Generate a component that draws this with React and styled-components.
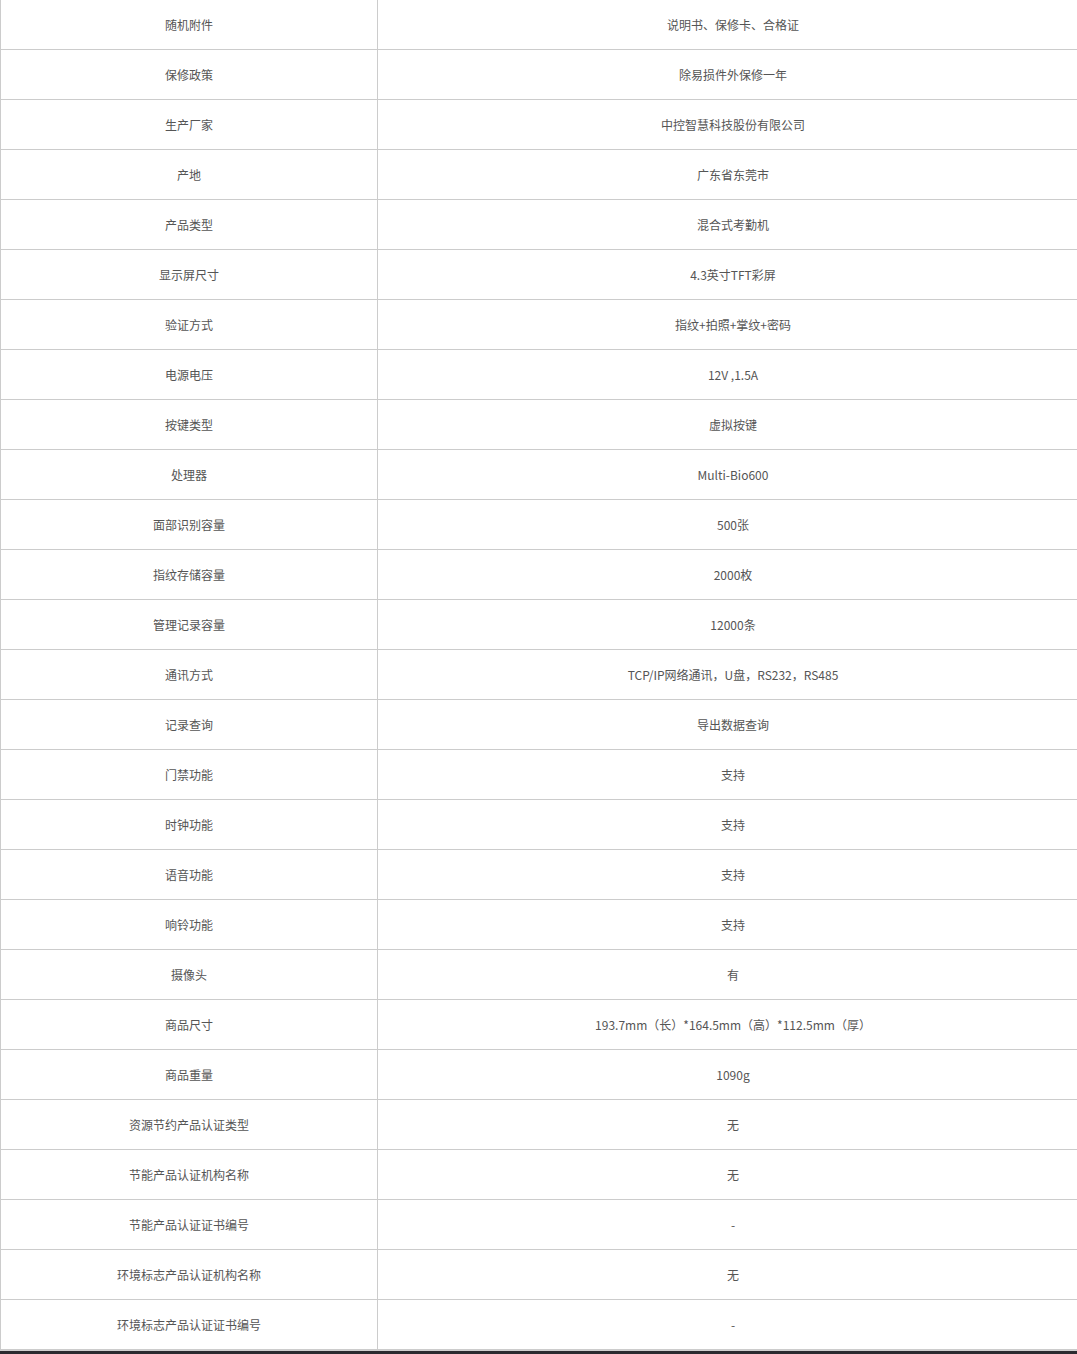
import React from "react";
import styled, { createGlobalStyle } from "styled-components";

const Global = createGlobalStyle`
  html, body { margin: 0; padding: 0; background: #fff; overflow: hidden; }
  body { font-family: "Microsoft YaHei", "Noto Sans CJK SC", "Noto Sans", sans-serif; }
`;

const Page = styled.div`
  width: 1077px;
  height: 1354px;
  overflow: hidden;
  display: flex;
  flex-direction: column;
`;

const Table = styled.div`
  width: 1088px;
  display: grid;
  grid-template-columns: 377px 710px;
  border-left: 1px solid #cccccc;
`;

const Cell = styled.div`
  height: 49px;
  border-bottom: 1px solid #cccccc;
  border-right: ${(p) => (p.$label ? "1px solid #cccccc" : "none")};
  display: flex;
  align-items: center;
  justify-content: center;
  font-size: 12px;
  color: #555555;
  box-sizing: content-box;
  white-space: nowrap;
`;

const Footer = styled.div`
  flex: 1;
  background: #2b2b30;
  border-top: 1px solid #d0d0d0;
`;

const rows = [
  ["随机附件", "说明书、保修卡、合格证"],
  ["保修政策", "除易损件外保修一年"],
  ["生产厂家", "中控智慧科技股份有限公司"],
  ["产地", "广东省东莞市"],
  ["产品类型", "混合式考勤机"],
  ["显示屏尺寸", "4.3英寸TFT彩屏"],
  ["验证方式", "指纹+拍照+掌纹+密码"],
  ["电源电压", "12V ,1.5A"],
  ["按键类型", "虚拟按键"],
  ["处理器", "Multi-Bio600"],
  ["面部识别容量", "500张"],
  ["指纹存储容量", "2000枚"],
  ["管理记录容量", "12000条"],
  ["通讯方式", "TCP/IP网络通讯，U盘，RS232，RS485"],
  ["记录查询", "导出数据查询"],
  ["门禁功能", "支持"],
  ["时钟功能", "支持"],
  ["语音功能", "支持"],
  ["响铃功能", "支持"],
  ["摄像头", "有"],
  ["商品尺寸", "193.7mm（长）*164.5mm（高）*112.5mm（厚）"],
  ["商品重量", "1090g"],
  ["资源节约产品认证类型", "无"],
  ["节能产品认证机构名称", "无"],
  ["节能产品认证证书编号", "-"],
  ["环境标志产品认证机构名称", "无"],
  ["环境标志产品认证证书编号", "-"],
];

export default function App() {
  return (
    <Page>
      <Global />
      <Table>
        {rows.map(([k, v]) => (
          <React.Fragment key={k}>
            <Cell $label>{k}</Cell>
            <Cell>{v}</Cell>
          </React.Fragment>
        ))}
      </Table>
      <Footer />
    </Page>
  );
}
